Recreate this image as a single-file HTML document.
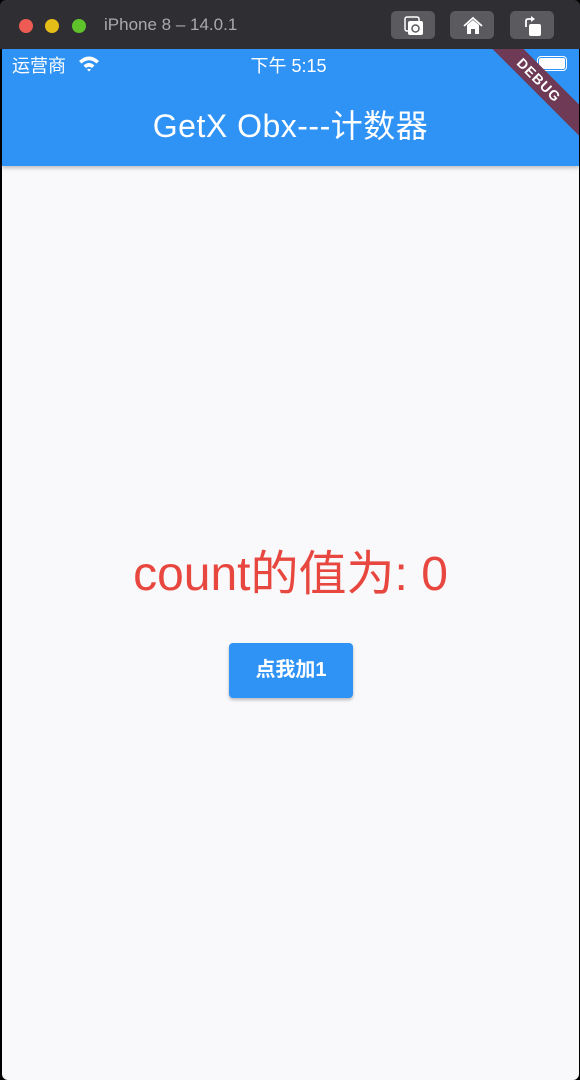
<!DOCTYPE html>
<html><head><meta charset="utf-8"><style>
*{margin:0;padding:0;box-sizing:border-box}
body{width:580px;height:1080px;background:#000;overflow:hidden;position:relative;font-family:"Liberation Sans","Noto Sans CJK SC",sans-serif}
.tb{position:absolute;left:0;top:0;width:580px;height:49px;background:#2e2e33;border-radius:6px 6px 0 0}
.dot{position:absolute;top:19px;width:14px;height:14px;border-radius:50%}
.tt{position:absolute;left:104px;top:15px;color:#a9a9ae;font-size:17px}
.btn{position:absolute;top:11px;width:44px;height:28px;border-radius:5px;background:#5a5a5f}
.btn svg{position:absolute;left:12px;top:4px}
.screen{position:absolute;left:2px;top:49px;width:577px;height:1031px;background:#f9f9fb;border-radius:0 0 6px 6px;overflow:hidden}
.bar{position:absolute;left:0;top:0;width:100%;height:117px;background:#2f93f6;box-shadow:0 2px 4px rgba(0,0,0,.25)}
.st{position:absolute;color:#fff;font-size:18px;top:3px}
.title{position:absolute;top:52px;width:100%;text-align:center;color:#fff;font-size:32px;letter-spacing:0.5px}
.ribbon{position:absolute;right:-40px;top:20px;width:160px;height:22px;background:#6e3a55;transform:rotate(45deg);color:#fff;font-size:14px;font-weight:bold;text-align:center;line-height:22px;letter-spacing:1px}
.count{position:absolute;top:485px;width:100%;text-align:center;color:#e8473f;font-size:48px}
.b{position:absolute;left:227px;top:594px;width:124px;height:55px;background:#2f93f6;border-radius:4px;box-shadow:0 2px 3px rgba(0,0,0,.25);color:#fff;font-size:20px;font-weight:bold;text-align:center;line-height:55px}
</style></head><body>
<div class="tb">
<div class="dot" style="left:19px;background:#ee5b55"></div>
<div class="dot" style="left:45px;background:#e5bd18"></div>
<div class="dot" style="left:72px;background:#5fc22a"></div>
<div class="tt">iPhone 8 – 14.0.1</div>
<div class="btn" style="left:391px"><svg width="22" height="22" viewBox="0 0 22 22"><rect x="2" y="2" width="14" height="14" rx="2" fill="none" stroke="#fff" stroke-width="1.5"/><rect x="5" y="6" width="15" height="14" rx="2" fill="#fff"/><circle cx="12.5" cy="13.5" r="3.5" fill="none" stroke="#5a5a5f" stroke-width="1.5"/></svg></div>
<div class="btn" style="left:450px"><svg width="22" height="22" viewBox="0 0 22 22"><path d="M2 11 L11 3 L20 11" fill="none" stroke="#fff" stroke-width="1.8"/><path d="M5 10 L11 5 L17 10 V19 H13 V14 H9 V19 H5 Z" fill="#fff"/></svg></div>
<div class="btn" style="left:510px"><svg width="22" height="22" viewBox="0 0 22 22"><path d="M4 12 V6 Q4 4 6 4 H10" fill="none" stroke="#fff" stroke-width="1.8"/><path d="M9 1 L13 4 L9 7 Z" fill="#fff"/><rect x="7" y="9" width="12" height="12" rx="2" fill="#fff"/></svg></div>
</div>
<div class="screen">
<div class="bar">
<div class="st" style="left:10px">运营商</div>
<svg style="position:absolute;left:76px;top:6px" width="22" height="17" viewBox="0 0 22 17"><path d="M1 6 Q11 -3 21 6 L18.5 8.5 Q11 2 3.5 8.5 Z" fill="#fff"/><path d="M5.5 10.5 Q11 5.5 16.5 10.5 L14 13 Q11 10.5 8 13 Z" fill="#fff"/><path d="M9 14.5 Q11 13 13 14.5 L11 16.5 Z" fill="#fff"/></svg>
<div class="st" style="left:0;width:100%;text-align:center;margin-left:-2px">下午 5:15</div>
<div style="position:absolute;right:12px;top:7px;width:30px;height:15px;border:1px solid #fff;border-radius:4px;padding:1px"><div style="background:#fff;width:100%;height:100%;border-radius:2px"></div></div>
<div class="title">GetX Obx---计数器</div>
<div class="ribbon">DEBUG</div>
</div>
<div class="count">count的值为: 0</div>
<div class="b">点我加1</div>
</div>
</body></html>
